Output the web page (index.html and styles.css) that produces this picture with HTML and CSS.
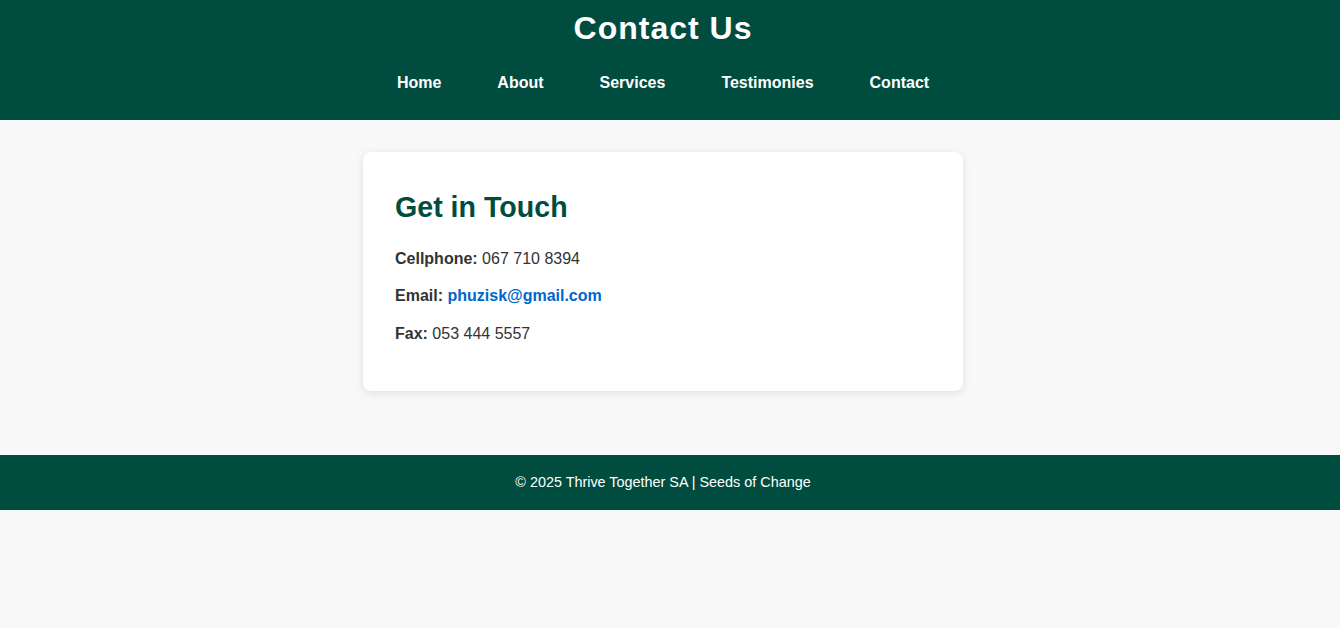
FILE: index.html
```html
<!DOCTYPE html>
<html lang="en">
<head>
<meta charset="utf-8">
<title>Contact Us</title>
<link rel="stylesheet" href="styles.css">
</head>
<body>
<header class="site-header">
  <h1 class="site-title">Contact Us</h1>
  <nav class="site-nav">
    <a href="#">Home</a>
    <a href="#">About</a>
    <a href="#">Services</a>
    <a href="#">Testimonies</a>
    <a href="#">Contact</a>
  </nav>
</header>
<main class="main">
  <section class="card">
    <h2 class="card-title">Get in Touch</h2>
    <p class="row"><strong>Cellphone:</strong> 067 710 8394</p>
    <p class="row"><strong>Email:</strong> <a class="mail" href="#">phuzisk@gmail.com</a></p>
    <p class="row"><strong>Fax:</strong> 053 444 5557</p>
  </section>
</main>
<footer class="site-footer">
  <p class="footer-text">&copy; 2025 Thrive Together SA | Seeds of Change</p>
</footer>
</body>
</html>
```
FILE: styles.css
```css
* { box-sizing: border-box; }
html, body {
  margin: 0;
  padding: 0;
  background: #f8f8f8;
  font-family: "Liberation Sans", Arial, sans-serif;
  color: #333;
  line-height: 1.6;
}
.site-header {
  background: #004d40;
  color: #fff;
  padding: 10px 14px 24px 0;
  text-align: center;
}
.site-title {
  margin: 0;
  font-size: 32px;
  line-height: 36px;
  font-weight: bold;
  letter-spacing: 1px;
}
.site-nav {
  margin-top: 24px;
  display: flex;
  justify-content: center;
  gap: 56px;
}
.site-nav a {
  color: #fff;
  text-decoration: none;
  font-weight: bold;
  font-size: 16px;
  line-height: 26px;
}
.main {
  padding: 32px 14px 64px 0;
  display: flex;
  justify-content: center;
}
.card {
  width: 600px;
  background: #fff;
  border-radius: 8px;
  box-shadow: 0 2px 8px rgba(0, 0, 0, 0.1);
  padding: 33px 32px 32px;
}
.card-title {
  margin: 0 0 16px;
  color: #004d40;
  font-size: 28.6px;
  line-height: 44.8px;
}
.row {
  margin: 12px 0;
  font-size: 16px;
  line-height: 25.6px;
}
.card-title + .row { margin-top: 16px; }
.mail {
  color: #0066cc;
  font-weight: bold;
  text-decoration: none;
}
.site-footer {
  background: #004d40;
  color: #fff;
  text-align: center;
  padding: 16px 14px 16px 0;
}
.footer-text {
  margin: 0;
  font-size: 14.4px;
  line-height: 23px;
}
```
